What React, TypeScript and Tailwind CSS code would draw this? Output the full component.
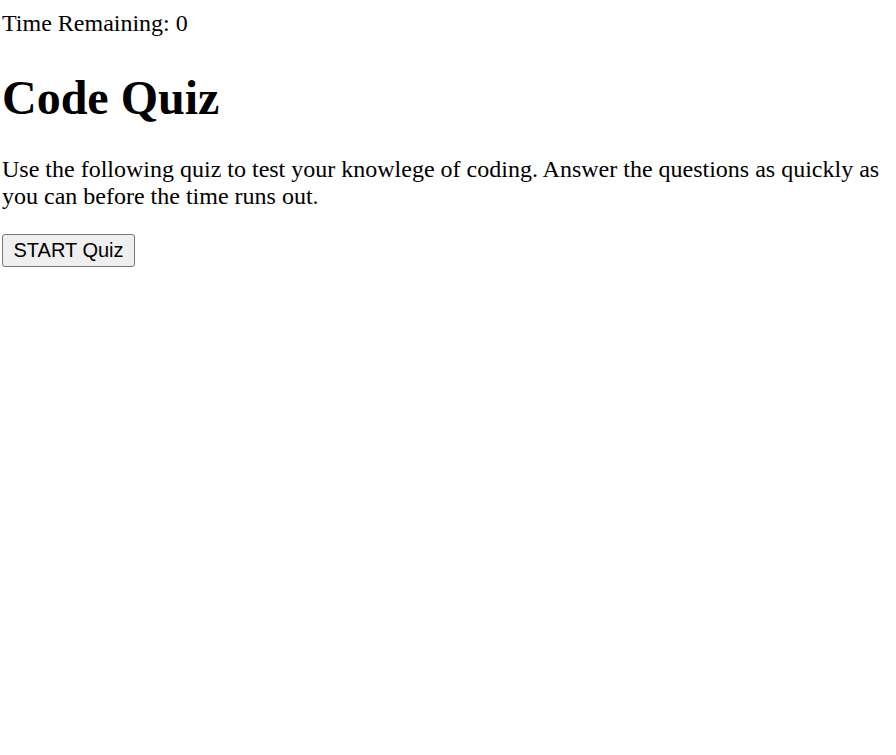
export default function App() {
  return (
    <div
      className="min-h-[755px] bg-white pt-[10px] px-[2px] text-black"
      style={{ fontFamily: '"Liberation Serif", "Times New Roman", serif' }}
    >
      <div className="text-[24px] leading-[27.6px]">Time Remaining: 0</div>
      <h1 className="mt-[32px] mb-[31px] text-[48px] leading-[55px] font-bold">Code Quiz</h1>
      <p className="text-[24px] leading-[27.6px] mb-[23px]">
        Use the following quiz to test your knowlege of coding. Answer the questions as quickly as you can before the time runs out.
      </p>
      <button
        className="h-[33px] px-[10.5px] border border-[#767676] bg-[#efefef] rounded-[3px] text-[20px] leading-[23px] text-black"
        style={{ fontFamily: '"Liberation Sans", Arial, sans-serif' }}
      >
        START Quiz
      </button>
    </div>
  );
}
